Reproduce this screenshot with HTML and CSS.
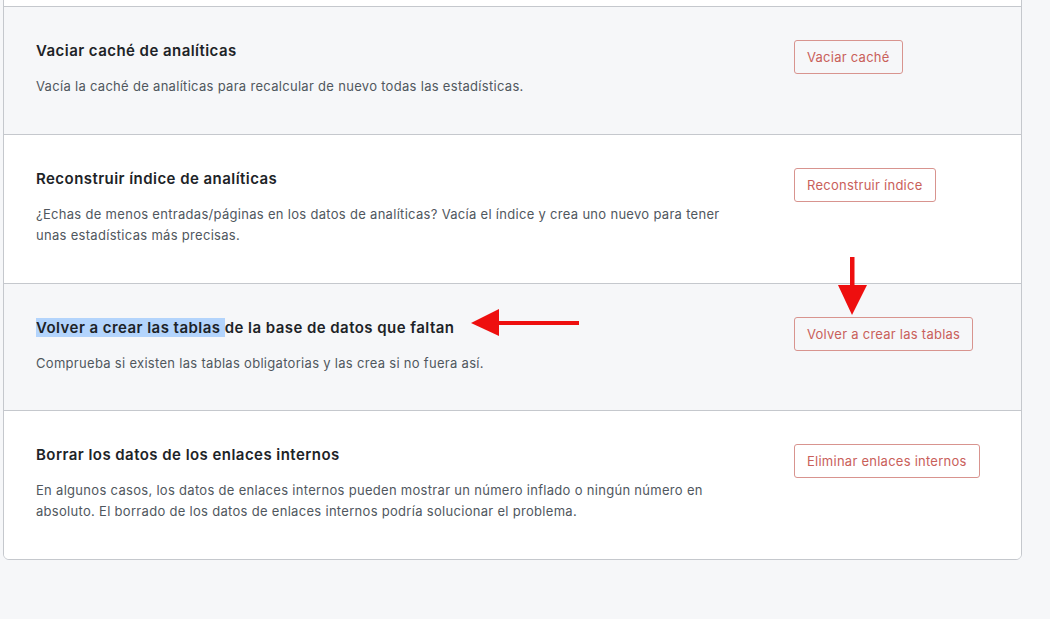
FILE: index.html
```html
<!DOCTYPE html>
<html lang="es">
<head>
    <meta charset="UTF-8">
    <meta name="viewport" content="width=device-width, initial-scale=1.0">
    <title>Herramientas de analíticas</title>
    <link rel="stylesheet" href="styles.css">
</head>
<body>
    <div class="page">
        <div class="card">
            <div class="row row-prev"></div>

            <div class="row row-alt">
                <div class="text">
                    <h3 class="title">Vaciar caché de analíticas</h3>
                    <p class="desc">Vacía la caché de analíticas para recalcular de nuevo todas las estadísticas.</p>
                </div>
                <div class="action">
                    <button class="btn">Vaciar caché</button>
                </div>
            </div>

            <div class="row">
                <div class="text">
                    <h3 class="title">Reconstruir índice de analíticas</h3>
                    <p class="desc">¿Echas de menos entradas/páginas en los datos de analíticas? Vacía el índice y crea uno nuevo para tener unas estadísticas más precisas.</p>
                </div>
                <div class="action">
                    <button class="btn">Reconstruir índice</button>
                </div>
            </div>

            <div class="row row-alt row-short">
                <div class="text">
                    <h3 class="title"><span class="selected">Volver a crear las tablas </span>de la base de datos que faltan</h3>
                    <p class="desc">Comprueba si existen las tablas obligatorias y las crea si no fuera así.</p>
                </div>
                <div class="action">
                    <button class="btn">Volver a crear las tablas</button>
                </div>
            </div>

            <div class="row">
                <div class="text">
                    <h3 class="title">Borrar los datos de los enlaces internos</h3>
                    <p class="desc">En algunos casos, los datos de enlaces internos pueden mostrar un número inflado o ningún número en absoluto. El borrado de los datos de enlaces internos podría solucionar el problema.</p>
                </div>
                <div class="action">
                    <button class="btn">Eliminar enlaces internos</button>
                </div>
            </div>
        </div>

        <!-- flechas de anotación -->
        <svg class="arrow arrow-left" width="112" height="30" viewBox="0 0 112 30">
            <rect x="26" y="12" width="82" height="4" fill="#ee0f0f"/>
            <polygon points="0,14 28,0 28,27" fill="#ee0f0f"/>
        </svg>
        <svg class="arrow arrow-down" width="32" height="62" viewBox="0 0 32 62">
            <rect x="14" y="0" width="4.5" height="32" fill="#ee0f0f"/>
            <polygon points="2,28 31,28 16,58" fill="#ee0f0f"/>
        </svg>
    </div>
</body>
</html>
```

FILE: styles.css
```css
* {
    box-sizing: border-box;
}

html, body {
    margin: 0;
    background: #f6f7f9;
}

body {
    font-family: Inter, "Noto Sans", sans-serif;
    color: #1d2327;
    height: 619px;
    overflow: hidden;
}

.page {
    display: flow-root;
    position: relative;
    padding-left: 3px;
}

.card {
    width: 1019px;
    margin-top: -40px;
    background: #fff;
    border: 1px solid #c5c8cd;
    border-radius: 6px;
    overflow: hidden;
}

.row {
    display: grid;
    grid-template-columns: 700px auto;
    column-gap: 58px;
    padding: 33px 32px 37px;
    background: #fff;
    border-top: 1px solid #c5c8cd;
}

.row-prev {
    height: 45px;
    padding: 0;
    border-top: none;
}

.row-alt {
    background: #f6f7f9;
}

.row-short {
    padding-bottom: 36px;
}

.title {
    margin: 1px 0 15px;
    font-size: 15px;
    line-height: 20px;
    font-weight: 600;
    letter-spacing: 0.45px;
    color: #1d2327;
}

.selected {
    background: #b3d4fc;
}

.desc {
    margin: 0;
    font-size: 13px;
    line-height: 21px;
    letter-spacing: 0.3px;
    color: #50575e;
}

.action {
    display: flex;
    align-items: flex-start;
}

.btn {
    height: 34px;
    padding: 0 12px;
    font-family: inherit;
    font-size: 13px;
    letter-spacing: 0.25px;
    color: #c9605a;
    background: transparent;
    border: 1px solid #d8948f;
    border-radius: 3px;
    white-space: nowrap;
}

/* flechas encima del contenido */
.arrow {
    position: absolute;
}

.arrow-left {
    left: 471px;
    top: 309px;
}

.arrow-down {
    left: 836px;
    top: 257px;
}
```
